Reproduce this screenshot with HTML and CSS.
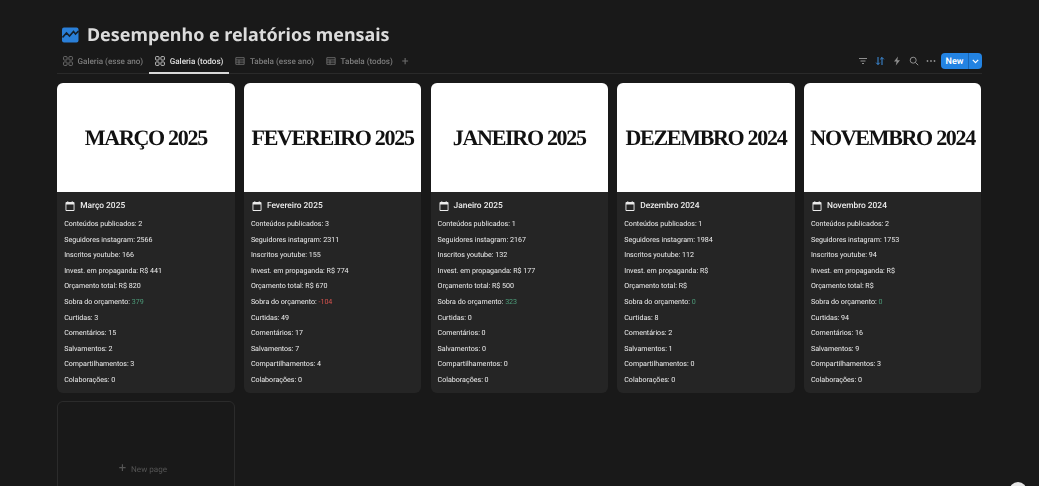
FILE: index.html
```html
<!DOCTYPE html>
<html lang="en">
<head>
    <meta charset="UTF-8">
    <title>Desempenho e relatórios mensais</title>
    <link rel="stylesheet" href="styles.css">
</head>
<body>
    <div class="page">
        <div class="page-title">
            <svg class="title-icon" width="17" height="16" viewBox="0 0 17 16">
                <rect x="0" y="0.5" width="16.5" height="15" rx="2" fill="#2a7fd8"/>
                <path d="M0.5 10.5 L4.5 6 L7.5 9 L11.5 4.5 L13.5 7 L16.5 4" fill="none" stroke="#14202c" stroke-width="1.6"/>
            </svg>
            <h1>Desempenho e relatórios mensais</h1>
        </div>

        <div class="toolbar">
            <div class="tabs">
                <div class="tab">
                    <svg class="tab-icon" viewBox="0 0 12 12"><use href="#icon-gallery"/></svg>
                    Galeria (esse ano)
                </div>
                <div class="tab active">
                    <svg class="tab-icon" viewBox="0 0 12 12"><use href="#icon-gallery"/></svg>
                    Galeria (todos)
                </div>
                <div class="tab">
                    <svg class="tab-icon" viewBox="0 0 12 12"><use href="#icon-table"/></svg>
                    Tabela (esse ano)
                </div>
                <div class="tab">
                    <svg class="tab-icon" viewBox="0 0 12 12"><use href="#icon-table"/></svg>
                    Tabela (todos)
                </div>
                <span class="tab-add">+</span>
            </div>
            <div class="actions">
                <svg class="action-icon" viewBox="0 0 10 10"><path d="M1 2.5H9M2.5 5H7.5M4 7.5H6" stroke="#8f8f8f" stroke-width="1" fill="none"/></svg>
                <svg class="action-icon" viewBox="0 0 10 10"><path d="M3 1V8.5M3 8.5L1.2 6.7M3 8.5L4.8 6.7M7 9V1.5M7 1.5L5.2 3.3M7 1.5L8.8 3.3" stroke="#3d8fe0" stroke-width="1" fill="none"/></svg>
                <svg class="action-icon" viewBox="0 0 10 10"><path d="M6 0.5L2 5.6H4.6L3.8 9.5L8 4.2H5.3Z" fill="#8f8f8f"/></svg>
                <svg class="action-icon" viewBox="0 0 10 10"><circle cx="4.2" cy="4.2" r="3" stroke="#8f8f8f" stroke-width="1" fill="none"/><path d="M6.4 6.4L9.2 9.2" stroke="#8f8f8f" stroke-width="1"/></svg>
                <svg class="action-icon" viewBox="0 0 10 10"><circle cx="1.5" cy="5" r="0.9" fill="#8f8f8f"/><circle cx="5" cy="5" r="0.9" fill="#8f8f8f"/><circle cx="8.5" cy="5" r="0.9" fill="#8f8f8f"/></svg>
                <div class="new-button">
                    <span class="new-label">New</span>
                    <span class="new-arrow">
                        <svg width="7" height="5" viewBox="0 0 7 5"><path d="M0.8 0.9L3.5 3.6L6.2 0.9" stroke="#fff" stroke-width="1.2" fill="none"/></svg>
                    </span>
                </div>
            </div>
        </div>

        <div class="gallery">
            <div class="card">
                <div class="cover"><span>MARÇO 2025</span></div>
                <div class="card-body">
                    <div class="card-title">
                        <svg class="cal-icon" viewBox="0 0 10 10"><use href="#icon-calendar"/></svg>
                        Março 2025
                    </div>
                    <p>Conteúdos publicados: 2</p>
                    <p>Seguidores instagram: 2566</p>
                    <p>Inscritos youtube: 166</p>
                    <p>Invest. em propaganda: R$ 441</p>
                    <p>Orçamento total: R$ 820</p>
                    <p>Sobra do orçamento: <span class="pos">379</span></p>
                    <p>Curtidas: 3</p>
                    <p>Comentários: 15</p>
                    <p>Salvamentos: 2</p>
                    <p>Compartilhamentos: 3</p>
                    <p>Colaborações: 0</p>
                </div>
            </div>

            <div class="card">
                <div class="cover"><span>FEVEREIRO 2025</span></div>
                <div class="card-body">
                    <div class="card-title">
                        <svg class="cal-icon" viewBox="0 0 10 10"><use href="#icon-calendar"/></svg>
                        Fevereiro 2025
                    </div>
                    <p>Conteúdos publicados: 3</p>
                    <p>Seguidores instagram: 2311</p>
                    <p>Inscritos youtube: 155</p>
                    <p>Invest. em propaganda: R$ 774</p>
                    <p>Orçamento total: R$ 670</p>
                    <p>Sobra do orçamento: <span class="neg">-104</span></p>
                    <p>Curtidas: 49</p>
                    <p>Comentários: 17</p>
                    <p>Salvamentos: 7</p>
                    <p>Compartilhamentos: 4</p>
                    <p>Colaborações: 0</p>
                </div>
            </div>

            <div class="card">
                <div class="cover"><span>JANEIRO 2025</span></div>
                <div class="card-body">
                    <div class="card-title">
                        <svg class="cal-icon" viewBox="0 0 10 10"><use href="#icon-calendar"/></svg>
                        Janeiro 2025
                    </div>
                    <p>Conteúdos publicados: 1</p>
                    <p>Seguidores instagram: 2167</p>
                    <p>Inscritos youtube: 132</p>
                    <p>Invest. em propaganda: R$ 177</p>
                    <p>Orçamento total: R$ 500</p>
                    <p>Sobra do orçamento: <span class="pos">323</span></p>
                    <p>Curtidas: 0</p>
                    <p>Comentários: 0</p>
                    <p>Salvamentos: 0</p>
                    <p>Compartilhamentos: 0</p>
                    <p>Colaborações: 0</p>
                </div>
            </div>

            <div class="card">
                <div class="cover"><span>DEZEMBRO 2024</span></div>
                <div class="card-body">
                    <div class="card-title">
                        <svg class="cal-icon" viewBox="0 0 10 10"><use href="#icon-calendar"/></svg>
                        Dezembro 2024
                    </div>
                    <p>Conteúdos publicados: 1</p>
                    <p>Seguidores instagram: 1984</p>
                    <p>Inscritos youtube: 112</p>
                    <p>Invest. em propaganda: R$</p>
                    <p>Orçamento total: R$</p>
                    <p>Sobra do orçamento: <span class="pos">0</span></p>
                    <p>Curtidas: 8</p>
                    <p>Comentários: 2</p>
                    <p>Salvamentos: 1</p>
                    <p>Compartilhamentos: 0</p>
                    <p>Colaborações: 0</p>
                </div>
            </div>

            <div class="card">
                <div class="cover"><span>NOVEMBRO 2024</span></div>
                <div class="card-body">
                    <div class="card-title">
                        <svg class="cal-icon" viewBox="0 0 10 10"><use href="#icon-calendar"/></svg>
                        Novembro 2024
                    </div>
                    <p>Conteúdos publicados: 2</p>
                    <p>Seguidores instagram: 1753</p>
                    <p>Inscritos youtube: 94</p>
                    <p>Invest. em propaganda: R$</p>
                    <p>Orçamento total: R$</p>
                    <p>Sobra do orçamento: <span class="pos">0</span></p>
                    <p>Curtidas: 94</p>
                    <p>Comentários: 16</p>
                    <p>Salvamentos: 9</p>
                    <p>Compartilhamentos: 3</p>
                    <p>Colaborações: 0</p>
                </div>
            </div>

            <div class="new-page"><span class="plus">+</span> New page</div>
        </div>
    </div>

    <div class="help-button"></div>

    <svg class="icon-defs" width="0" height="0">
        <symbol id="icon-gallery" viewBox="0 0 12 12">
            <g fill="none" stroke="currentColor" stroke-width="1">
                <rect x="0.7" y="0.7" width="4.2" height="4.2" rx="1"/>
                <rect x="7.1" y="0.7" width="4.2" height="4.2" rx="1"/>
                <rect x="0.7" y="7.1" width="4.2" height="4.2" rx="1"/>
                <rect x="7.1" y="7.1" width="4.2" height="4.2" rx="1"/>
            </g>
        </symbol>
        <symbol id="icon-table" viewBox="0 0 12 12">
            <path d="M1 2H11V10H1ZM1 4.7H11M1 7.3H11M4.8 4.7V10" fill="none" stroke="currentColor" stroke-width="0.9"/>
        </symbol>
        <symbol id="icon-calendar" viewBox="0 0 10 10">
            <path fill-rule="evenodd" d="M1.5 1H2.5V0H3.2V1H6.8V0H7.5V1H8.5A1 1 0 0 1 9.5 2V9A1 1 0 0 1 8.5 10H1.5A1 1 0 0 1 0.5 9V2A1 1 0 0 1 1.5 1ZM1.4 3.6V9.1H8.6V3.6Z" fill="currentColor"/>
        </symbol>
    </svg>
</body>
</html>
```
FILE: styles.css
```css
html, body {
    height: 100%;
}
body {
    margin: 0;
    background-color: #191919;
    color: #e6e6e6;
    font-family: "Roboto", "Liberation Sans", sans-serif;
    text-rendering: geometricPrecision;
    overflow: hidden;
}
.page {
    padding: 23px 57px 0 57px;
    width: 925px;
    height: 463px;
    overflow: hidden;
    will-change: opacity; /* greyscale text, no colour fringes */
}
.page-title {
    display: flex;
    align-items: center;
    gap: 8px;
    height: 24px;
    padding-left: 5px;
}
.title-icon {
    flex: none;
}
.page-title h1 {
    margin: 0;
    font-family: "Noto Sans", sans-serif;
    font-size: 17.9px;
    font-weight: 700;
    color: #dcdcdc;
    white-space: nowrap;
}
.toolbar {
    display: flex;
    justify-content: space-between;
    align-items: stretch;
    height: 24px;
    padding-top: 2px;
    border-bottom: 1px solid #2a2a2a;
}
.tabs {
    display: flex;
    align-items: stretch;
}
.tab {
    display: flex;
    align-items: center;
    gap: 4.5px;
    padding: 0 6px;
    font-size: 8.1px;
    font-weight: 500;
    color: #7d7d7d;
    white-space: nowrap;
    margin-bottom: -1px;
    border-bottom: 2px solid transparent;
}
.tab.active {
    color: #e0e0e0;
    border-bottom-color: #d8d8d8;
}
.tab-icon {
    width: 10px;
    height: 10px;
    flex: none;
}
.tab-add {
    font-size: 12px;
    color: #6a6a6a;
    align-self: center;
    padding-left: 3px;
}
.actions {
    display: flex;
    align-items: center;
    gap: 7px;
}
.action-icon {
    width: 10px;
    height: 10px;
}
.new-button {
    display: flex;
    height: 16px;
    border-radius: 4px;
    background-color: #2383e2;
    color: #fff;
    font-size: 9px;
    font-weight: 600;
    align-items: center;
    margin-left: -1.5px;
}
.new-label {
    width: 27px;
    text-align: center;
    line-height: 18px;
    height: 16px;
    border-right: 1px solid #1a66b4;
}
.new-arrow {
    width: 13px;
    display: flex;
    justify-content: center;
}
.gallery {
    display: grid;
    grid-template-columns: repeat(5, 177.4px);
    column-gap: 9.3px;
    row-gap: 8px;
    padding-top: 9px;
    margin-left: 0.2px;
}
.card {
    border-radius: 6px;
    overflow: hidden;
    background-color: #252525;
}
/* last card still rendered with colour fringes; the green line keeps its colour */
.card:nth-child(5) .cover span,
.card:nth-child(5) .card-title,
.card:nth-child(5) p:not(:nth-of-type(6)) {
    filter: grayscale(1);
}
.cover {
    height: 109px;
    background-color: #fff;
    display: flex;
    align-items: center;
    justify-content: center;
    padding: 0 6px;
    overflow: hidden;
}
.cover span {
    display: block;
    white-space: nowrap;
    color: #111;
    font-family: "Liberation Serif", serif;
    font-weight: 700;
    font-size: 22px;
    letter-spacing: -1.3px;
}
.card-body {
    padding: 7px 7px 5px 7px;
}
.card-title {
    display: flex;
    align-items: center;
    gap: 5px;
    height: 14px;
    padding-left: 1px;
    font-size: 8.4px;
    font-weight: 500;
    color: #ececec;
    margin-bottom: 3px;
}
.cal-icon {
    width: 10px;
    height: 10px;
}
.card-body p {
    margin: 0;
    font-size: 7.1px;
    line-height: 15.6px;
    color: #efefef;
}
.pos {
    color: #4e9f7c;
}
.neg {
    color: #d9534f;
}
.new-page {
    height: 120px;
    border: 1px solid #2b2b2b;
    border-radius: 6px;
    display: flex;
    justify-content: center;
    padding: 62px 6px 0 0;
    box-sizing: border-box;
    font-size: 8.1px;
    color: #555;
    gap: 5px;
}
.plus {
    font-size: 13px;
    line-height: 10px;
}
.help-button {
    position: fixed;
    left: 1009px;
    top: 482px;
    width: 18px;
    height: 18px;
    border-radius: 50%;
    background-color: #e6e6e6;
}
.icon-defs {
    position: absolute;
}
```
